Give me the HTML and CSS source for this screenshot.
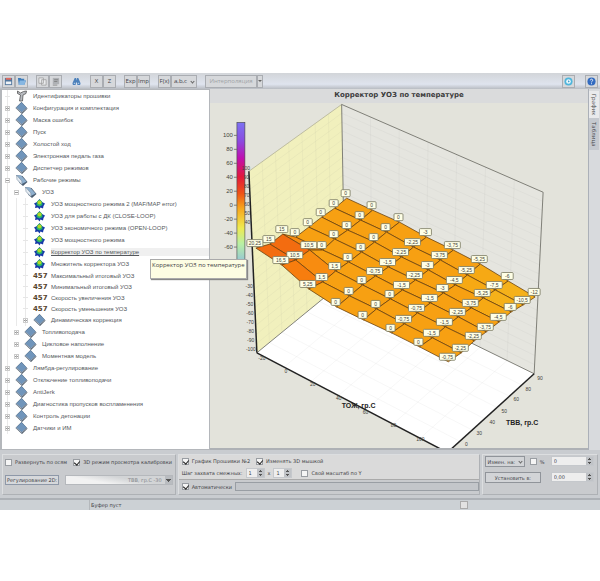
FILE: index.html
```html
<!DOCTYPE html>
<html lang="ru">
<head>
<meta charset="utf-8">
<title>Корректор УОЗ по температуре</title>
<link rel="stylesheet" href="styles.css">
</head>
<body>
<svg class="defs" aria-hidden="true">
  <defs>
    <symbol id="book" viewBox="0 0 12 12"><path d="M6 0 12 6.500 6.500 12 0 6z" fill="#334253"/><path d="M6 .3 11.200 5.600 6.300 10.200.6 5.400z" fill="#7095bb"/><path d="M.6 5.800 6.200 10.600 11.400 6" fill="none" stroke="#d7dde4" stroke-width=".7"/></symbol>
    <symbol id="open" viewBox="0 0 12 12"><path d="M1 1 7 2 12 8 7.500 12 4 9z" fill="#4a5c70"/><path d="M1 1 5.500 1.500 11 7.500 6.500 10z" fill="#8fb0cf"/><path d="M1 1 1.500 5.500 6.500 11 6.300 7z" fill="#e4ebf2" stroke="#6b7f93" stroke-width=".5"/></symbol>
    <symbol id="map" viewBox="0 0 12 12"><path d="M6 1 8.500 4 11.500 5.500 10 8 9.500 10.500 7 9.500 6 11.500 4.500 9.500 1.500 10 2 7.500.5 5.500 3.500 4z" fill="#1538a8"/><path d="M6 1.500 8.500 3.500 9 7 6 8.500 3 7 3.500 3.500z" fill="#25b56a"/><circle cx="6" cy="4.500" r="2" fill="#b2d629"/></symbol>
    <symbol id="tool" viewBox="0 0 12 12"><path d="M2 1 5 3 8 1.500 11 1 10.500 3.500 7.500 5 7 11H4L5 5 2 3.500z" fill="#b8bbc0" stroke="#555" stroke-width=".8"/></symbol>
  </defs>
</svg>
<div class="app">
  <header class="toolbar">
    <div class="group">
      <button aria-label="Сохранить"><svg viewBox="0 0 10 10"><path d="M1 1H9V9H1z" fill="#52779e"/><path d="M2 1H8V3H2z" fill="#e16a5d"/><path d="M2 5H8V8H2z" fill="#eef2f6"/></svg></button>
      <button aria-label="Открыть"><svg viewBox="0 0 10 10"><path d="M1 1H4L5 2H8V4H10L8 9H2z" fill="#3f7dbb"/><path d="M3 4H10L8 9H2z" fill="#87b7e2"/></svg></button>
    </div>
    <div class="group">
      <button aria-label="Копировать"><svg viewBox="0 0 10 10" fill="#e9ebed" stroke="#999" stroke-width=".8"><path d="M1 1H6V7H1zM4 3H9V9H4z"/></svg></button>
      <button aria-label="Вставить"><svg viewBox="0 0 10 10"><path d="M2 1H9V8H2z" fill="#aeb1b5"/><path d="M3.500 3H8M3.500 5H7M2 9H7" stroke="#777" stroke-width=".8"/></svg></button>
    </div>
    <button class="flat" aria-label="Поиск"><svg viewBox="0 0 10 10" fill="#4c80bb"><path d="M3 1H4.500L5 4 5.500 1H7L9.500 7 9 9H6L5.500 6H4.500L4 9H1L.5 7z"/><path d="M2 7H3.500M6.500 7H8" stroke="#d4e4f3"/></svg></button>
    <div class="group"><button>X</button><button>Z</button></div>
    <div class="group"><button>Exp</button><button>Imp</button></div>
    <div class="group"><button>F(x)</button><button class="wide">a,b,c <span class="chev"></span></button></div>
    <div class="group"><button class="interp" disabled>Интерполяция</button><button class="arrow" aria-label="Выбор"><span class="tri"></span></button></div>
    <button class="push" aria-label="Обновить"><svg viewBox="0 0 10 10"><circle cx="5" cy="5" r="4.500" fill="#4fb5dc"/><circle cx="5" cy="5" r="2.600" fill="#e7f6fb"/><path d="M4.500 3.500 6.500 5 4.500 6z" fill="#3998c6"/></svg></button>
    <button class="help" aria-label="Справка"><svg viewBox="0 0 10 10"><circle cx="5" cy="5" r="4.500" fill="#326bc0"/><path d="M3.700 3.700C3.700 1.900 6.500 2 6.300 3.800 6.200 4.700 5 4.700 5 6M5 7V8" fill="none" stroke="#fff"/></svg></button>
  </header>

  <main class="work">
    <nav class="tree"><ul id="tree"></ul><div class="tip" role="tooltip">Корректор УОЗ по температуре</div></nav>
    <section class="chart">
      <h1>Корректор УОЗ по температуре</h1>
      <svg id="plot" viewBox="209 103 379 345" role="img" aria-label="Корректор УОЗ по температуре">
        <defs><linearGradient id="scale" x1="0" y1="0" x2="0" y2="1">
          <stop offset="0" stop-color="#7c72f2"/><stop offset=".13" stop-color="#8b4be0"/><stop offset=".25" stop-color="#c010b0"/><stop offset=".38" stop-color="#e2183c"/><stop offset=".5" stop-color="#ef5516"/><stop offset=".6" stop-color="#f7a51c"/><stop offset=".74" stop-color="#eeea50"/><stop offset=".85" stop-color="#b9f0a4"/><stop offset="1" stop-color="#8dbddf"/>
        </linearGradient></defs>
      </svg>
    </section>
    <aside class="tabs"><button class="on">График</button><button>Таблица</button></aside>
  </main>

  <form class="panel">
    <div class="box left">
      <div class="row"><label><input type="checkbox">Развернуть по осям</label><label><input type="checkbox" checked>3D режим просмотра калибровки</label></div>
      <div class="row"><label class="framed" for="axis">Регулирование 2D:</label><span class="combo"><select id="axis"><option>ТВВ, гр.С -30</option></select></span></div>
    </div>
    <div class="box mid">
      <div class="upper">
        <div class="row"><label><input type="checkbox" checked>График Прошивки №2</label><label><input type="checkbox" checked>Изменять 3D мышкой</label></div>
        <div class="row steps"><label for="sx">Шаг захвата смежных:</label>
          <span class="spin small"><input id="sx" value="1"><span class="ud"><button type="button" aria-label="Больше"></button><button type="button" aria-label="Меньше"></button></span></span>
          <label for="sy">x</label>
          <span class="spin small"><input id="sy" value="1"><span class="ud"><button type="button" aria-label="Больше"></button><button type="button" aria-label="Меньше"></button></span></span>
          <label class="own"><input type="checkbox">Свой масштаб по Y</label></div>
      </div>
      <div class="row lower"><label><input type="checkbox" checked>Автоматически</label><div class="bar"></div></div>
    </div>
    <div class="box right">
      <button type="button">Измен. на: <span class="chev"></span></button>
      <label><input type="checkbox">%</label>
      <span class="spin"><input aria-label="Изменить на" value="0"><span class="ud"><button type="button" aria-label="Больше"></button><button type="button" aria-label="Меньше"></button></span></span>
      <button type="button" class="set">Установить в:</button>
      <span class="spin"><input aria-label="Установить в" value="0,00"><span class="ud"><button type="button" aria-label="Больше"></button><button type="button" aria-label="Меньше"></button></span></span>
    </div>
  </form>
  <footer class="status"><span class="cell"></span><span class="msg">Буфер пуст</span><span class="grip"></span></footer>
</div>
<script src="app.js"></script>
</body>
</html>
```
FILE: styles.css
```css
* { box-sizing: border-box; }
body { margin: 0; padding-top: 73px; background: #fff; font: 6px/8px "Liberation Sans", Arial, sans-serif; color: #3f4246; }
button, input, select { font: inherit; color: inherit; margin: 0; padding: 0; }
.defs { position: absolute; width: 0; height: 0; }
.app { background: #c9ccd0; }

.toolbar { display: flex; align-items: center; height: 16px; padding: 1px 2px; background: linear-gradient(#d2d5d9, #dfe4ee 70%, #b8bcc2); }
.toolbar .group { display: flex; margin-right: 8px; }
.toolbar button { display: flex; align-items: center; justify-content: center; gap: 4px; min-width: 13px; height: 13px; padding: 0; border: 1px solid #aaadb2; background: #d6d8db; font-family: "Open Sans", "Noto Sans", sans-serif; }
.toolbar svg { width: 9px; height: 9px; }
.toolbar .flat { border-color: transparent; background: none; margin-right: 7px; }
.toolbar .wide { width: 26px; }
.toolbar .interp { width: 52px; color: #a0a3a7; }
.toolbar .arrow { min-width: 6px; width: 6px; }
.toolbar .push { margin-left: auto; }
.toolbar .help { margin-left: 10px; }
.chev { width: 3px; height: 3px; border: solid #666; border-width: 0 1px 1px 0; transform: rotate(45deg); }
.tri { border: 2px solid transparent; border-top-color: #666; border-bottom: 0; }

.work { display: flex; min-height: 361px; }
.tree { position: relative; flex: 0 0 35%; display: flex; border: 1px solid #b4b7bb; border-width: 1px 1px 1px 2px; background: #fff; }
.tree ul { flex: 1; display: flex; flex-direction: column; margin: 0; padding: 0 0 15px; list-style: none; }
.tree li { flex: 1; display: flex; align-items: center; padding-left: 3px; white-space: nowrap; background: linear-gradient(#e9e9e9, #e9e9e9) 5px 0 / 1px 100% no-repeat; }
.tree .l1 { padding-left: 12px; }
.tree .l2 { padding-left: 21px; background: linear-gradient(90deg, transparent 5px, #e9e9e9 5px 6px, transparent 6px 14px, #e9e9e9 14px 15px, transparent 15px 23px, #e9e9e9 23px 24px, transparent 24px); }
.tree .sel a { flex: 1; text-decoration: underline; background: #f0f0f0; }
.tree a { color: #55585c; text-decoration: none; }
.tree li svg { flex: none; width: 13px; height: 12px; margin-right: 5px; }
.tree .exp { position: relative; width: 5px; height: 5px; margin-right: 5px; border: 1px solid #ccc; background: #fff; }
.tree .exp::before { content: ""; position: absolute; left: 0; right: 0; top: 1px; height: 1px; background: #999; }
.tree .plus::after { content: ""; position: absolute; left: 1px; top: 0; bottom: 0; width: 1px; background: #bbb; }
.tree .none { width: 5px; height: 1px; margin-right: 5px; background: #e6e6e6; }
.tree .num { width: 13px; margin-right: 5px; font: bold 7px/8px "DejaVu Sans", sans-serif; color: #57452f; }
.tip { position: absolute; left: 148px; top: 169px; padding: 1px 1px 9px; white-space: nowrap; border: 1px solid #aaa; background: #fdfde3; box-shadow: 1px 1px 1px #888; font-family: "Open Sans", sans-serif; z-index: 1; }

.chart { flex: 1; display: flex; flex-direction: column; min-width: 0; background: #e3e3db; border-bottom: 2px solid #aeb1b5; }
.chart h1 { margin: 0; padding: 1px 0 3px; text-align: center; background: #dadbdc; font: bold 7px/10px "DejaVu Sans", sans-serif; color: #3c3c3c; }
.chart svg { flex: 1; display: block; width: 100%; }
.chart text { font: 5px "Liberation Sans", sans-serif; fill: #44443c; text-anchor: middle; }
.chart .key { font-size: 6px; text-anchor: end; }
.chart .axis { font: bold 7px "Liberation Sans", sans-serif; fill: #222; }
.mesh { stroke: #6b4310; stroke-width: .8; stroke-linejoin: round; }
.tag { fill: #ffffe6; stroke: #77775f; stroke-width: .8; }
.grid { stroke: #888; stroke-opacity: .12; stroke-width: .6; }
.tabs { flex: 0 0 12px; display: flex; flex-direction: column; padding: 2px 1px 0 0; border-left: 1px solid #abb0b8; background: #d8dadd; }
.tabs button { height: 27px; border: 0; background: #e9eaec; writing-mode: vertical-rl; font-family: "Open Sans", sans-serif; }
.tabs button + button { height: 32px; background: #c5c9cf; }

.panel { display: flex; gap: 2px; padding: 4px 2px 3px; border-bottom: 2px solid #adb1b6; font: 5px/8px "DejaVu Sans", sans-serif; }
.box { min-width: 0; border: 1px solid #b3b6ba; border-color: #dcdee0 #aeb1b5 #aeb1b5 #dcdee0; background: #c9cbce; }
.row { display: flex; align-items: center; gap: 6px; white-space: nowrap; }
.panel label { display: flex; align-items: center; gap: 3px; }
.panel input[type=checkbox] { appearance: none; flex: none; width: 7px; height: 7px; border: 1px solid #999da2; background: #f5f5f5; position: relative; }
.panel input[type=checkbox]:checked::after { content: ""; position: absolute; left: 1px; top: 0; width: 3px; height: 4px; border: solid #222; border-width: 0 1px 1px 0; transform: rotate(40deg); }
.left { flex: 172; display: flex; flex-direction: column; gap: 9px; padding: 3px 2px; }
.framed { padding: 0 1px; height: 10px; border: 1px solid #8e98a8; background: #d6d8db; }
.combo { position: relative; flex: 1; display: flex; }
.combo select { appearance: none; width: 100%; height: 10px; padding: 0 10px; border: 1px solid #b5b8bc; background: linear-gradient(10deg, #f2f2f2 30%, #d2d4d6 60%); color: #85888c; text-align: right; text-align-last: right; border-radius: 0; }
.combo::after { content: ""; position: absolute; right: 1px; top: 1px; width: 7px; height: 8px; background: linear-gradient(#555, #555) 1px 3px / 5px 1px no-repeat, linear-gradient(#555, #555) 2px 4px / 3px 1px no-repeat, linear-gradient(#555, #555) 3px 5px / 1px 1px no-repeat, #b9bcc0; }
.mid { flex: 308; display: flex; flex-direction: column; }
.upper { flex: 1; display: flex; flex-direction: column; gap: 3px; padding: 2px 3px 1px; background: #dadada; border-bottom: 1px solid #aaa; }
.steps { gap: 3px; }
.own { margin-left: 6px; }
.lower { padding: 2px 0 3px 3px; gap: 3px; }
.bar { flex: 1; height: 9px; border: 1px solid #999ea4; background: #c3c6ca; }
.right { flex: 112; display: grid; grid-template-columns: 40px 16px 1fr; column-gap: 5px; row-gap: 5px; align-content: start; padding: 1px 3px 1px 2px; }
.right > button { display: flex; align-items: center; justify-content: center; gap: 4px; height: 11px; border: 1px solid #90949a; background: #d2d4d7; white-space: nowrap; }
.right .set { grid-column: span 2; margin-right: 5px; }
.spin { display: flex; min-width: 0; height: 10px; background: #eee; border: 1px solid #c5c8cc; }
.spin.small { width: 19px; }
.spin > input { flex: 1; width: 0; min-width: 0; border: 0; padding: 0 2px; background: none; }
.ud { display: flex; flex-direction: column; width: 7px; }
.ud button { flex: 1; border: 0; background: linear-gradient(#555, #555) 3px 1px / 1px 1px no-repeat, linear-gradient(#555, #555) 2px 2px / 3px 1px no-repeat, #c0c3c7; }
.ud button + button { background: linear-gradient(#555, #555) 2px 1px / 3px 1px no-repeat, linear-gradient(#555, #555) 3px 2px / 1px 1px no-repeat, #c0c3c7; }

.status { display: flex; align-items: center; height: 10px; background: #ccd1d5; }
.cell { flex: 0 0 15%; height: 100%; border-right: 1px solid #b4b8bc; }
.msg { flex: 1; padding-left: 1px; font: 5px/8px "DejaVu Sans", sans-serif; }
.grip { width: 8px; height: 8px; margin-right: 22%; border: 1px solid #aaa; background: #e2e2e2; }
```
FILE: app.js
```js
// Navigation tree: [level, icon, expander, title]
const items = [
  [0, 'tool', '', 'Идентификаторы прошивки'], [0, 'book', '+', 'Конфигурация и комплектация'],
  [0, 'book', '+', 'Маска ошибок'], [0, 'book', '+', 'Пуск'], [0, 'book', '+', 'Холостой ход'],
  [0, 'book', '+', 'Электронная педаль газа'], [0, 'book', '+', 'Диспетчер режимов'],
  [0, 'open', '-', 'Рабочие режимы'], [1, 'open', '-', 'УОЗ'],
  [2, 'map', '', 'УОЗ мощностного режима 2 (MAF/MAP error)'], [2, 'map', '', 'УОЗ для работы с ДК (CLOSE-LOOP)'],
  [2, 'map', '', 'УОЗ экономичного режима (OPEN-LOOP)'], [2, 'map', '', 'УОЗ мощностного режима'],
  [2, 'map', '', 'Корректор УОЗ по температуре'], [2, 'map', '', 'Множитель корректора УОЗ'],
  [2, 'num', '', 'Максимальный итоговый УОЗ'], [2, 'num', '', 'Минимальный итоговый УОЗ'],
  [2, 'num', '', 'Скорость увеличения УОЗ'], [2, 'num', '', 'Скорость уменьшения УОЗ'],
  [2, 'book', '+', 'Динамическая коррекция'], [1, 'book', '+', 'Топливоподача'],
  [1, 'book', '+', 'Цикловое наполнение'], [1, 'book', '+', 'Моментная модель'],
  [0, 'book', '+', 'Лямбда-регулирование'], [0, 'book', '+', 'Отключение топливоподачи'],
  [0, 'book', '+', 'AntiJerk'], [0, 'book', '+', 'Диагностика пропусков воспламенения'],
  [0, 'book', '+', 'Контроль детонации'], [0, 'book', '+', 'Датчики и ИМ']
];
document.getElementById('tree').innerHTML = items.map(([level, icon, exp, title], i) => {
  const box = exp ? `<span class="exp ${exp === '+' ? 'plus' : ''}"></span>` : '<span class="none"></span>';
  const pic = icon === 'num' ? '<span class="num">457</span>' : `<svg><use href="#${icon}"/></svg>`;
  return `<li class="l${level} ${i === 13 ? 'sel' : ''}">${box}${pic}<a href="#">${title}</a></li>`;
}).join('');

// Surface nodes, back row first: [x, y, value]
const rows = [
  [[345,193,0],[371,205,0],[398,217,0],[425,232,-3],[452,245,-3.75],[479,259,-5.25],[507,276,-6],[534,292,-12]],
  [[333,203,0],[359,215,0],[385,227,0],[412,242,-2.25],[439,255,-3.75],[466,270,-5.25],[494,285,-7.5],[522,300,-10.5]],
  [[320,212,0],[346,225,0],[373,237,0],[400,252,-2.25],[427,265,-3],[454,280,-4.5],[482,293,-5.25],[510,307,-6]],
  [[307,222,0],[333,234,0],[360,247,0],[387,262,-1.5],[414,275,-2.25],[442,288,-3],[470,303,-3.75],[498,317,-4.5]],
  [[294,232,0],[321,245,0],[347,257,0],[374,271,-0.75],[401,285,-1.5],[429,298,-1.5],[457,312,-2.25],[485,327,-3.75]],
  [[281,229,15],[308,245,10.5],[334,266,1.5],[361,280,0],[389,294,0],[416,308,-0.75],[444,322,-1.5],[473,336,-2.25]],
  [[268,239,15],[294,255,10.5],[321,277,1.5],[348,291,0],[375,304,0],[403,319,-0.75],[431,333,-1.5],[460,348,-2.25]],
  [[254,243,20.25],[280,260,16.5],[307,284,5.25],[335,302,0],[362,315,0],[390,328,0],[418,342,0],[447,357,-0.75]]
];
const line = (a, b, c, d, extra) => `<path d="M${a} ${b}L${c} ${d}" ${extra}/>`;
const mix = (p, q, t) => [p[0] + (q[0] - p[0]) * t, p[1] + (q[1] - p[1]) * t];
const TL = [248,171], TB = [341,104], TR = [543,192], BL = [256,353], BB = [344,281], BR = [534,374], BF = [447,453];
const poly = (pts, fill) => `<polygon points="${pts.join(' ')}" fill="${fill}"/>`;
let out = poly([TL, TB, BB, BL], '#f1f0bd') + poly([TB, TR, BR, BB], '#e5e5df') + poly([BL, BB, BR, BF], '#fff');
for (let i = 1; i < 20; i++) {
  const t = i / 20;
  out += line(...mix(TL, BL, t), ...mix(TB, BB, t), 'class="grid"') + line(...mix(TB, BB, t), ...mix(TR, BR, t), 'class="grid"');
}
for (let i = 1; i < 7; i++) {
  const t = i / 7;
  out += line(...mix(TL, TB, t), ...mix(BL, BB, t), 'class="grid"') + line(...mix(TB, TR, t), ...mix(BB, BR, t), 'class="grid"')
    + line(...mix(BL, BB, t), ...mix(BF, BR, t), 'class="grid"') + line(...mix(BL, BF, t), ...mix(BB, BR, t), 'class="grid"');
}
const thin = 'stroke="#66665e" stroke-width=".8"', thick = 'stroke="#222" stroke-width="1.5"';
out += line(...TL, ...TB, 'stroke="#aaa98d" stroke-width=".7"') + line(...TB, ...TR, thin) + line(...TR, ...BR, thin) + line(...TB, ...BB, thin)
  + line(...BL, ...BB, thin) + line(...BB, ...BR, thin) + line(...BL, ...BF, thick) + line(...BF, ...BR, thick);
out += '<rect x="236" y="122" width="8" height="143" fill="url(#scale)" stroke="#444" stroke-width=".6"/>';
[100, 80, 60, 40, 20, 0, -20, -40, -60].forEach((v, i) => {
  out += line(233, 135 + i * 14, 236, 135 + i * 14, thin) + `<text class="key" x="232" y="${137 + i * 14}">${v}</text>`;
});
// Height marks; those behind the first node tag and the tooltip are left out
for (let i = 0; i <= 20; i++) {
  if (i > 6 && i < 13) continue;
  const p = mix([245, 170], [250, 351], i / 20);
  out += `<text x="${p[0]}" y="${p[1]}">${100 - i * 10}</text>`;
}
out += line(...TL, ...BL, thick);
const shade = v => v > 12 ? '#f36c10' : v > 7 ? '#f77d0e' : v > 3 ? '#f88c10' : v < -6.5 ? '#f5b11a' : v < -4.5 ? '#f6a914' : '#f7a012';
for (let r = 0; r < 7; r++) for (let c = 0; c < 7; c++) {
  const q = [rows[r][c], rows[r][c + 1], rows[r + 1][c + 1], rows[r + 1][c]];
  const avg = q.reduce((s, p) => s + p[2], 0) / 4;
  out += `<polygon class="mesh" points="${q.map(p => [p[0] + 1, p[1] + 5])}" fill="${shade(avg)}"/>`;
}
rows.flat().forEach(([x, y, v]) => {
  const s = String(v).replace('.', ','), w = s.length < 2 ? 9 : s.length < 4 ? 12 : 16;
  out += `<rect class="tag" x="${x - w / 2}" y="${y - 3.5}" width="${w}" height="7" rx="1"/><text x="${x}" y="${y + 2}">${s}</text>`;
});
[[261,360,-20],[285,373,0],[312,386,20],[338,400,40],[365,414,60],[393,427,80],[420,441,100],
 [466,446,0],[479,435,30],[492,424,40],[504,413,50],[516,401,60],[528,391,80],[540,380,90]]
  .forEach(([x, y, v]) => { out += `<text x="${x}" y="${y}">${v}</text>`; });
out += '<text class="axis" x="358" y="408">ТОЖ, гр.С</text><text class="axis" x="522" y="425">ТВВ, гр.С</text>';
document.getElementById('plot').insertAdjacentHTML('beforeend', out);
```
